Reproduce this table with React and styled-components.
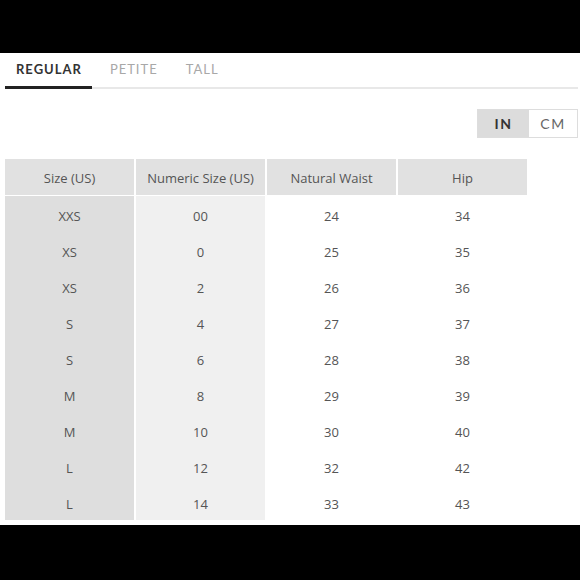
import React from "react";
import styled, { createGlobalStyle } from "styled-components";

const Global = createGlobalStyle`
  html, body { margin: 0; padding: 0; background: #000; }
  * { box-sizing: border-box; }
`;

const Frame = styled.div`
  width: 580px;
  height: 580px;
  background: #000;
  padding: 53px 0 55px;
`;

const Panel = styled.div`
  height: 472px;
  background: #fff;
  padding: 0 2px 0 5px;
  display: flex;
  flex-direction: column;
`;

const TabList = styled.div`
  display: flex;
  gap: 7px;
  height: 36px;
  border-bottom: 2px solid #e8e8e8;
`;

const Tab = styled.div`
  display: flex;
  align-items: center;
  padding: 0 10px 2px 11px;
  margin-bottom: -2px;
  font-family: Lato, "Open Sans", sans-serif;
  font-size: 13px;
  letter-spacing: 1px;
  font-weight: ${(p) => (p.$active ? 700 : 400)};
  color: ${(p) => (p.$active ? "#333" : "#a8a8a8")};
  border-bottom: 3px solid ${(p) => (p.$active ? "#222" : "transparent")};
`;

const ToggleRow = styled.div`
  display: flex;
  justify-content: flex-end;
  margin-top: 20px;
`;

const Toggle = styled.div`
  display: flex;
  border: 1px solid #dddddd;
  height: 29px;
`;

const ToggleOption = styled.div`
  width: ${(p) => p.$w}px;
  display: flex;
  align-items: center;
  justify-content: center;
  font-family: Lato, "Open Sans", sans-serif;
  font-size: 14px;
  letter-spacing: 1.5px;
  font-weight: ${(p) => (p.$active ? 700 : 400)};
  color: ${(p) => (p.$active ? "#333" : "#666")};
  background: ${(p) => (p.$active ? "#dcdcdc" : "#fff")};
`;

const Grid = styled.div`
  margin-top: 21px;
  display: grid;
  grid-template-columns: repeat(4, 129px);
  column-gap: 2px;
  font-family: "Open Sans", sans-serif;
  font-size: 13px;
  color: #555;
`;

const HeadCell = styled.div`
  height: 37px;
  padding-top: 2px;
  border-bottom: 1px solid #fff;
  background: #e1e1e1;
  display: flex;
  align-items: center;
  justify-content: center;
`;

const Cell = styled.div`
  height: 36px;
  padding-top: 3px;
  display: flex;
  align-items: center;
  justify-content: center;
  background: ${(p) => p.$bg};
`;

const headers = ["Size (US)", "Numeric Size (US)", "Natural Waist", "Hip"];
const rows = [
  ["XXS", "00", "24", "34"],
  ["XS", "0", "25", "35"],
  ["XS", "2", "26", "36"],
  ["S", "4", "27", "37"],
  ["S", "6", "28", "38"],
  ["M", "8", "29", "39"],
  ["M", "10", "30", "40"],
  ["L", "12", "32", "42"],
  ["L", "14", "33", "43"],
];
const colBg = ["#dedede", "#f0f0f0", "#fff", "#fff"];

export default function App() {
  return (
    <>
      <Global />
      <Frame>
        <Panel>
          <TabList>
            <Tab $active>REGULAR</Tab>
            <Tab>PETITE</Tab>
            <Tab>TALL</Tab>
          </TabList>
          <ToggleRow>
            <Toggle>
              <ToggleOption $active $w={51}>IN</ToggleOption>
              <ToggleOption $w={48}>CM</ToggleOption>
            </Toggle>
          </ToggleRow>
          <Grid>
            {headers.map((h) => (
              <HeadCell key={h}>{h}</HeadCell>
            ))}
            {rows.map((r, i) =>
              r.map((v, j) => (
                <Cell key={`${i}-${j}`} $bg={colBg[j]}>
                  {v}
                </Cell>
              ))
            )}
          </Grid>
        </Panel>
      </Frame>
    </>
  );
}
